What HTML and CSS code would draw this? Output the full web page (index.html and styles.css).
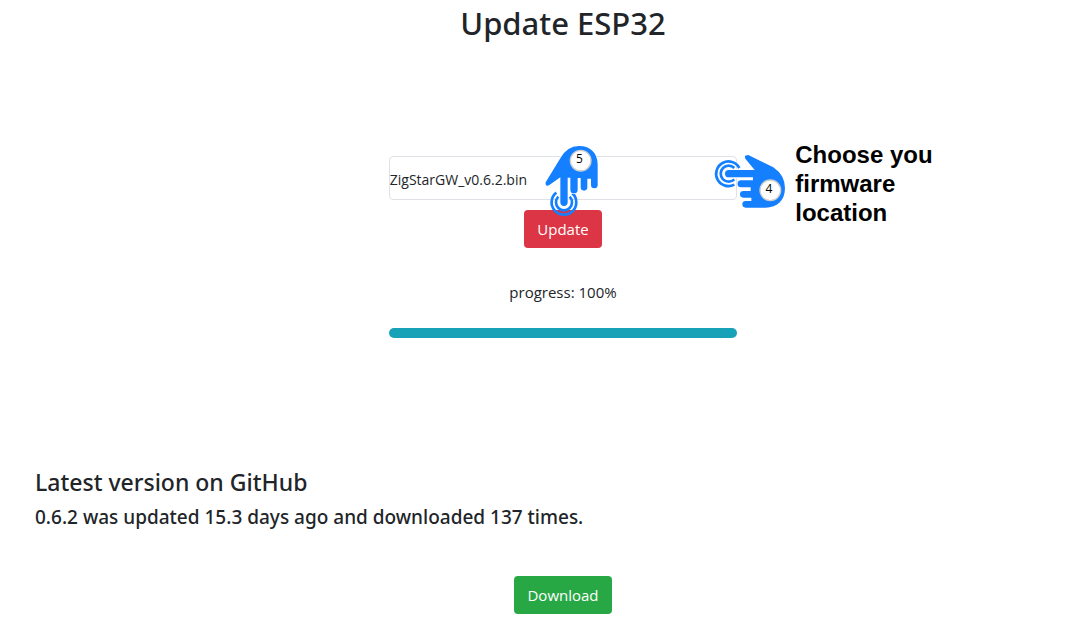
FILE: index.html
```html
<!DOCTYPE html>
<html lang="en">
<head>
<meta charset="utf-8">
<meta name="viewport" content="width=device-width, initial-scale=1">
<title>Update ESP32</title>
<link rel="stylesheet" href="styles.css">
</head>
<body>
<main class="page">
  <h1 class="title">Update ESP32</h1>
  <form class="update-form">
    <div class="field">
      <input class="file-name" type="text" aria-label="Firmware file" value="ZigStarGW_v0.6.2.bin" readonly>
      <svg class="hand hand-down" viewBox="0 0 240 255" aria-hidden="true">
        <g fill="none" stroke="#1580ff" stroke-width="8">
          <path d="M64 173A37 37 0 1 0 112 175Q121 182 122 190"/>
          <path d="M70 185A24 24 0 1 0 104 185"/>
        </g>
        <path fill="#1580ff" stroke="#fff" stroke-width="4" paint-order="stroke" d="M32 142L76 70Q96 33 132 33C168 33 188 56 188 88V150A10 10 0 0 1 168 150V131H157V157A10 10 0 0 1 137 157V129H128V164A11 11 0 0 1 106 164V128H98V202A11 11 0 0 1 76 202V127L42 151Q30 156 32 142Z"/>
        <circle cx="137" cy="77" r="31" fill="#fff" stroke="#ccc" stroke-width="4"/>
        <text class="step" x="133" y="84">5</text>
      </svg>
      <svg class="hand hand-left" viewBox="0 0 270 225" aria-hidden="true">
        <g fill="none" stroke="#1580ff" stroke-width="8">
          <path d="M88 134A37 37 0 1 1 103 84"/>
          <path d="M88 118A24 24 0 1 1 88 84"/>
        </g>
        <path fill="#1580ff" stroke="#fff" stroke-width="4" paint-order="stroke" d="M130 45L205 82Q240 106 240 145C240 182 216 203 182 203H122A10 10 0 0 1 122 183H139V173H115A10 10 0 0 1 115 153H137V142H108A10 10 0 0 1 108 121H144V112H71A11 11 0 0 1 71 90H149L121 56Q116 45 130 45Z"/>
        <circle cx="196" cy="151" r="31" fill="#fff" stroke="#ccc" stroke-width="4"/>
        <text class="step" x="192" y="158">4</text>
      </svg>
      <p class="hint">Choose you firmware location</p>
    </div>
    <button class="btn btn-update" type="button">Update</button>
    <label class="progress-label" for="progress">progress: 100%</label>
    <progress class="bar" id="progress" value="100" max="100"></progress>
  </form>
  <section class="release">
    <h2 class="release-title">Latest version on GitHub</h2>
    <p class="release-info">0.6.2 was updated 15.3 days ago and downloaded 137 times.</p>
    <button class="btn btn-download" type="button">Download</button>
  </section>
</main>
</body>
</html>
```
FILE: styles.css
```css
* { box-sizing: border-box; }
html { overflow-x: hidden; }
body {
  margin: 0;
  overflow-x: hidden;
  background: #fff;
  color: #212529;
  font: 15px/24px "Open Sans", "Noto Sans", sans-serif;
}
.page { margin: 0 -18px 0 35px; }
.title, .release-title, .release-info {
  font-family: "Noto Sans", "Open Sans", sans-serif;
  font-weight: 500;
}
.title {
  margin: 0;
  padding-top: 4px;
  font-size: 31px;
  line-height: 38px;
  text-align: center;
}
.update-form {
  display: flex;
  flex-direction: column;
  align-items: center;
  width: 33%;
  margin: 114px auto 0;
}
.field { position: relative; width: 100%; }
.file-name {
  display: block;
  width: 100%;
  height: 44px;
  padding: 2px 0 0;
  border: 1px solid #dee2e6;
  border-radius: 4px;
  background: #fff;
  color: #212529;
  font: inherit;
  font-size: 14px;
}
.hand { position: absolute; }
.hand-down { left: 146px; top: -21px; width: 80px; height: 85px; z-index: 1; }
.hand-left { right: -58px; top: -16px; width: 90px; height: 75px; }
.step {
  fill: #000;
  font: 36px "Open Sans", sans-serif;
  text-anchor: middle;
}
.hint {
  position: absolute;
  left: 100%;
  top: -16px;
  width: 150px;
  margin: 0 0 0 58px;
  color: #000;
  font: bold 24px/29px "Liberation Sans", Arial, sans-serif;
}
.btn {
  height: 38px;
  padding: 0 13px;
  border: 0;
  border-radius: 4px;
  color: #fff;
  font: inherit;
}
.btn-update { margin-top: 10px; background: #dc3545; }
.btn-download { margin-top: 47px; background: #28a745; }
.progress-label { margin-top: 32px; }
.bar {
  display: block;
  width: 100%;
  height: 10px;
  margin-top: 24px;
  border: 0;
  border-radius: 5px;
  overflow: hidden;
  appearance: none;
  background: #e9ecef;
}
.bar::-webkit-progress-bar { background: #e9ecef; }
.bar::-webkit-progress-value { background: #17a2b8; }
.bar::-moz-progress-bar { background: #17a2b8; }
.release { margin-top: 130px; text-align: center; }
.release-title, .release-info { margin: 0; text-align: left; }
.release-title { font-size: 23px; line-height: 29px; }
.release-info { margin-top: 8px; font-size: 19px; line-height: 24px; }
```
